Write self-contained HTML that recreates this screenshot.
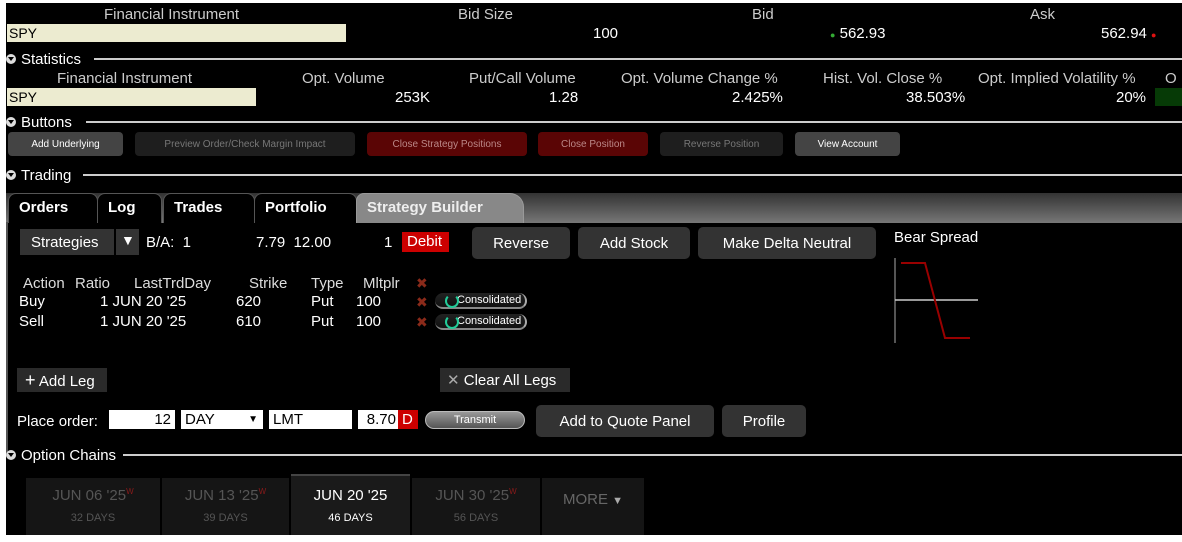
<!DOCTYPE html>
<html><head><style>
*{margin:0;padding:0;box-sizing:border-box}
body{width:1182px;height:542px;background:#fff;position:relative;overflow:hidden;font-family:"Liberation Sans","DejaVu Sans",sans-serif;color:#fff;font-size:15px}
#m{position:absolute;left:6px;top:3px;width:1176px;height:532px;background:#000}
.a{position:absolute;white-space:nowrap}
.sec{position:absolute;left:6px;height:14px;font-size:15px;display:flex;align-items:center}
.sec i{display:inline-block;width:10px;height:10px;border-radius:50%;background:#ddd;margin-right:5px;position:relative}
.sec i:after{content:"";position:absolute;left:2px;top:3px;border-left:3px solid transparent;border-right:3px solid transparent;border-top:4px solid #000}
.hl{position:absolute;height:2px;background:#ccc;right:0}
.btn{position:absolute;height:24px;border-radius:4px;font-size:10px;display:flex;align-items:center;justify-content:center}
.b2{position:absolute;height:32px;border-radius:5px;background:#333;font-size:15px;display:flex;align-items:center;justify-content:center}
.tab{position:absolute;top:193px;height:30px;background:#000;border:1px solid #555;border-bottom:none;border-radius:8px 8px 0 0;font-weight:bold;font-size:15px;padding:5px 0 0 10px}
.inp{position:absolute;top:410px;height:19px;background:#fff;color:#000;font-size:15px;line-height:19px;padding:0 4px}
.x{color:#8a2a1a;font-weight:bold;font-size:14px}
.cons{position:absolute;width:92px;height:16px;border-radius:8px;background:linear-gradient(#222,#111);border-bottom:2px solid #888;border-right:2px solid #aaa;font-size:11px;padding-left:22px;line-height:15px}
.cons:before{content:"";position:absolute;left:10px;top:1px;width:10px;height:10px;border:2px solid #2c9;border-radius:50%;border-top-color:transparent}
.ch{position:absolute;top:478px;height:57px;background:#151515;text-align:center;color:#555}
.ch b{display:block;font-weight:normal;font-size:15px;margin-top:9px}
.ch s{text-decoration:none;display:block;font-size:11px;margin-top:8px}
.ch sup{color:#8a1a1a;font-size:8px}
</style></head><body>
<div id="m"></div>
<div class="a" style="left:104px;top:6px;color:#ccc">Financial Instrument</div>
<div class="a" style="left:458px;top:6px;color:#ccc">Bid Size</div>
<div class="a" style="left:752px;top:6px;color:#ccc">Bid</div>
<div class="a" style="left:1030px;top:6px;color:#ccc">Ask</div>
<div class="a" style="left:7px;top:24px;width:339px;height:18px;background:#ecebd0;color:#000;padding-left:2px;line-height:18px;font-size:14px">SPY</div>
<div class="a" style="left:593px;top:25px">100</div>
<div class="a" style="left:830px;top:25px"><span style="color:#3a3;font-size:9px">●</span> 562.93</div>
<div class="a" style="left:1101px;top:25px">562.94 <span style="color:#d11;font-size:9px">●</span></div>
<div class="sec" style="top:52px"><i></i>Statistics</div><div class="hl" style="left:94px;top:58px"></div>
<div class="a" style="left:57px;top:70px;color:#ccc">Financial Instrument</div>
<div class="a" style="left:302px;top:70px;color:#ccc">Opt. Volume</div>
<div class="a" style="left:469px;top:70px;color:#ccc">Put/Call Volume</div>
<div class="a" style="left:621px;top:70px;color:#ccc">Opt. Volume Change %</div>
<div class="a" style="left:823px;top:70px;color:#ccc">Hist. Vol. Close %</div>
<div class="a" style="left:978px;top:70px;color:#ccc">Opt. Implied Volatility %</div>
<div class="a" style="left:1165px;top:70px;color:#ccc">O</div>
<div class="a" style="left:7px;top:88px;width:249px;height:18px;background:#ecebd0;color:#000;padding-left:2px;line-height:18px;font-size:14px">SPY</div>
<div class="a" style="left:395px;top:89px">253K</div>
<div class="a" style="left:549px;top:89px">1.28</div>
<div class="a" style="left:732px;top:89px">2.425%</div>
<div class="a" style="left:906px;top:89px">38.503%</div>
<div class="a" style="left:1116px;top:89px">20%</div>
<div class="a" style="left:1155px;top:88px;width:27px;height:18px;background:#063a06"></div>
<div class="sec" style="top:115px"><i></i>Buttons</div><div class="hl" style="left:86px;top:121px"></div>
<div class="btn" style="left:8px;top:132px;width:115px;background:#444">Add Underlying</div>
<div class="btn" style="left:135px;top:132px;width:220px;background:#1e1e1e;color:#777">Preview Order/Check Margin Impact</div>
<div class="btn" style="left:367px;top:132px;width:160px;background:#5a0505;color:#b88">Close Strategy Positions</div>
<div class="btn" style="left:538px;top:132px;width:110px;background:#5a0505;color:#b88">Close Position</div>
<div class="btn" style="left:660px;top:132px;width:123px;background:#1e1e1e;color:#777">Reverse Position</div>
<div class="btn" style="left:795px;top:132px;width:105px;background:#444">View Account</div>
<div class="sec" style="top:168px"><i></i>Trading</div><div class="hl" style="left:83px;top:174px"></div>
<div class="a" style="left:6px;top:193px;width:1176px;height:30px;background:linear-gradient(#333,#777)"></div>
<div class="tab" style="left:8px;width:90px">Orders</div>
<div class="tab" style="left:97px;width:65px">Log</div>
<div class="tab" style="left:163px;width:92px">Trades</div>
<div class="tab" style="left:254px;width:103px">Portfolio</div>
<div class="tab" style="left:356px;width:168px;background:#888;border-color:#999;color:#eee;border-radius:8px 14px 0 0">Strategy Builder</div>
<div class="a" style="left:6px;top:222px;width:2px;height:232px;background:#555"></div>
<div class="a" style="left:20px;top:229px;width:94px;height:26px;background:#333;font-size:15px;padding:5px 0 0 11px">Strategies</div>
<div class="a" style="left:116px;top:229px;width:23px;height:26px;background:#333;font-size:14px;padding:3px 0 0 5px">▼</div>
<div class="a" style="left:146px;top:234px">B/A:&nbsp;&nbsp;1</div>
<div class="a" style="left:256px;top:234px">7.79&nbsp;&nbsp;12.00</div>
<div class="a" style="left:384px;top:234px">1</div>
<div class="a" style="left:402px;top:232px;width:47px;height:20px;background:#c00;font-size:15px;padding:1px 0 0 5px">Debit</div>
<div class="b2" style="left:472px;top:227px;width:98px">Reverse</div>
<div class="b2" style="left:578px;top:227px;width:112px">Add Stock</div>
<div class="b2" style="left:698px;top:227px;width:178px">Make Delta Neutral</div>
<div class="a" style="left:894px;top:229px;font-size:15px">Bear Spread</div>
<svg class="a" style="left:890px;top:255px" width="100" height="90"><line x1="5" y1="3" x2="5" y2="88" stroke="#aaa"/><line x1="5" y1="45" x2="88" y2="45" stroke="#ccc" stroke-width="1.5"/><polyline points="11,8 35,8 55,83 80,83" fill="none" stroke="#900" stroke-width="2"/></svg>
<div class="a" style="left:23px;top:275px;color:#ddd">Action</div>
<div class="a" style="left:75px;top:275px;color:#ddd">Ratio</div>
<div class="a" style="left:134px;top:275px;color:#ddd">LastTrdDay</div>
<div class="a" style="left:249px;top:275px;color:#ddd">Strike</div>
<div class="a" style="left:311px;top:275px;color:#ddd">Type</div>
<div class="a" style="left:363px;top:275px;color:#ddd">Mltplr</div>
<div class="a x" style="left:416px;top:275px">✖</div>
<div class="a" style="left:19px;top:293px">Buy</div><div class="a" style="left:100px;top:293px">1 JUN 20 '25</div><div class="a" style="left:236px;top:293px">620</div><div class="a" style="left:311px;top:293px">Put</div><div class="a" style="left:356px;top:293px">100</div>
<div class="a x" style="left:416px;top:294px">✖</div>
<div class="cons" style="left:435px;top:293px">Consolidated</div>
<div class="a" style="left:19px;top:313px">Sell</div><div class="a" style="left:100px;top:313px">1 JUN 20 '25</div><div class="a" style="left:236px;top:313px">610</div><div class="a" style="left:311px;top:313px">Put</div><div class="a" style="left:356px;top:313px">100</div>
<div class="a x" style="left:416px;top:314px">✖</div>
<div class="cons" style="left:435px;top:314px">Consolidated</div>
<div class="a" style="left:17px;top:368px;width:90px;height:24px;background:#2a2a2a;font-size:15px;padding:2px 0 0 8px"><span style="font-size:18px">+</span> Add Leg</div>
<div class="a" style="left:440px;top:368px;width:130px;height:24px;background:#2a2a2a;font-size:15px;padding:3px 0 0 7px"><span style="color:#aaa">✕</span> Clear All Legs</div>
<div class="a" style="left:17px;top:413px;font-size:15px">Place order:</div>
<div class="inp" style="left:109px;width:66px;text-align:right">12</div>
<div class="inp" style="left:181px;width:82px">DAY<span style="position:absolute;right:5px;font-size:10px">▼</span></div>
<div class="inp" style="left:269px;width:83px">LMT</div>
<div class="inp" style="left:358px;width:40px;text-align:right;padding-right:2px">8.70</div>
<div class="inp" style="left:398px;width:20px;background:#c00;color:#fff">D</div>
<div class="a" style="left:425px;top:411px;width:100px;height:18px;border-radius:9px;background:linear-gradient(#999,#555);border:1px solid #bbb;font-size:11px;text-align:center;line-height:16px">Transmit</div>
<div class="b2" style="left:536px;top:405px;width:178px">Add to Quote Panel</div>
<div class="b2" style="left:722px;top:405px;width:84px">Profile</div>
<div class="sec" style="top:448px"><i></i>Option Chains</div><div class="hl" style="left:123px;top:454px"></div>
<div class="ch" style="left:26px;width:134px"><b>JUN 06 '25<sup>W</sup></b><s>32 DAYS</s></div>
<div class="ch" style="left:162px;width:127px"><b>JUN 13 '25<sup>W</sup></b><s>39 DAYS</s></div>
<div class="ch" style="left:291px;width:119px;top:474px;height:61px;border-top:2px solid #444;color:#fff;background:#1a1a1a"><b style="margin-top:11px">JUN 20 '25</b><s>46 DAYS</s></div>
<div class="ch" style="left:412px;width:128px"><b>JUN 30 '25<sup>W</sup></b><s>56 DAYS</s></div>
<div class="ch" style="left:542px;width:102px;color:#666"><b style="margin-top:13px">MORE <span style="font-size:11px;color:#aaa">▼</span></b></div>
</body></html>
